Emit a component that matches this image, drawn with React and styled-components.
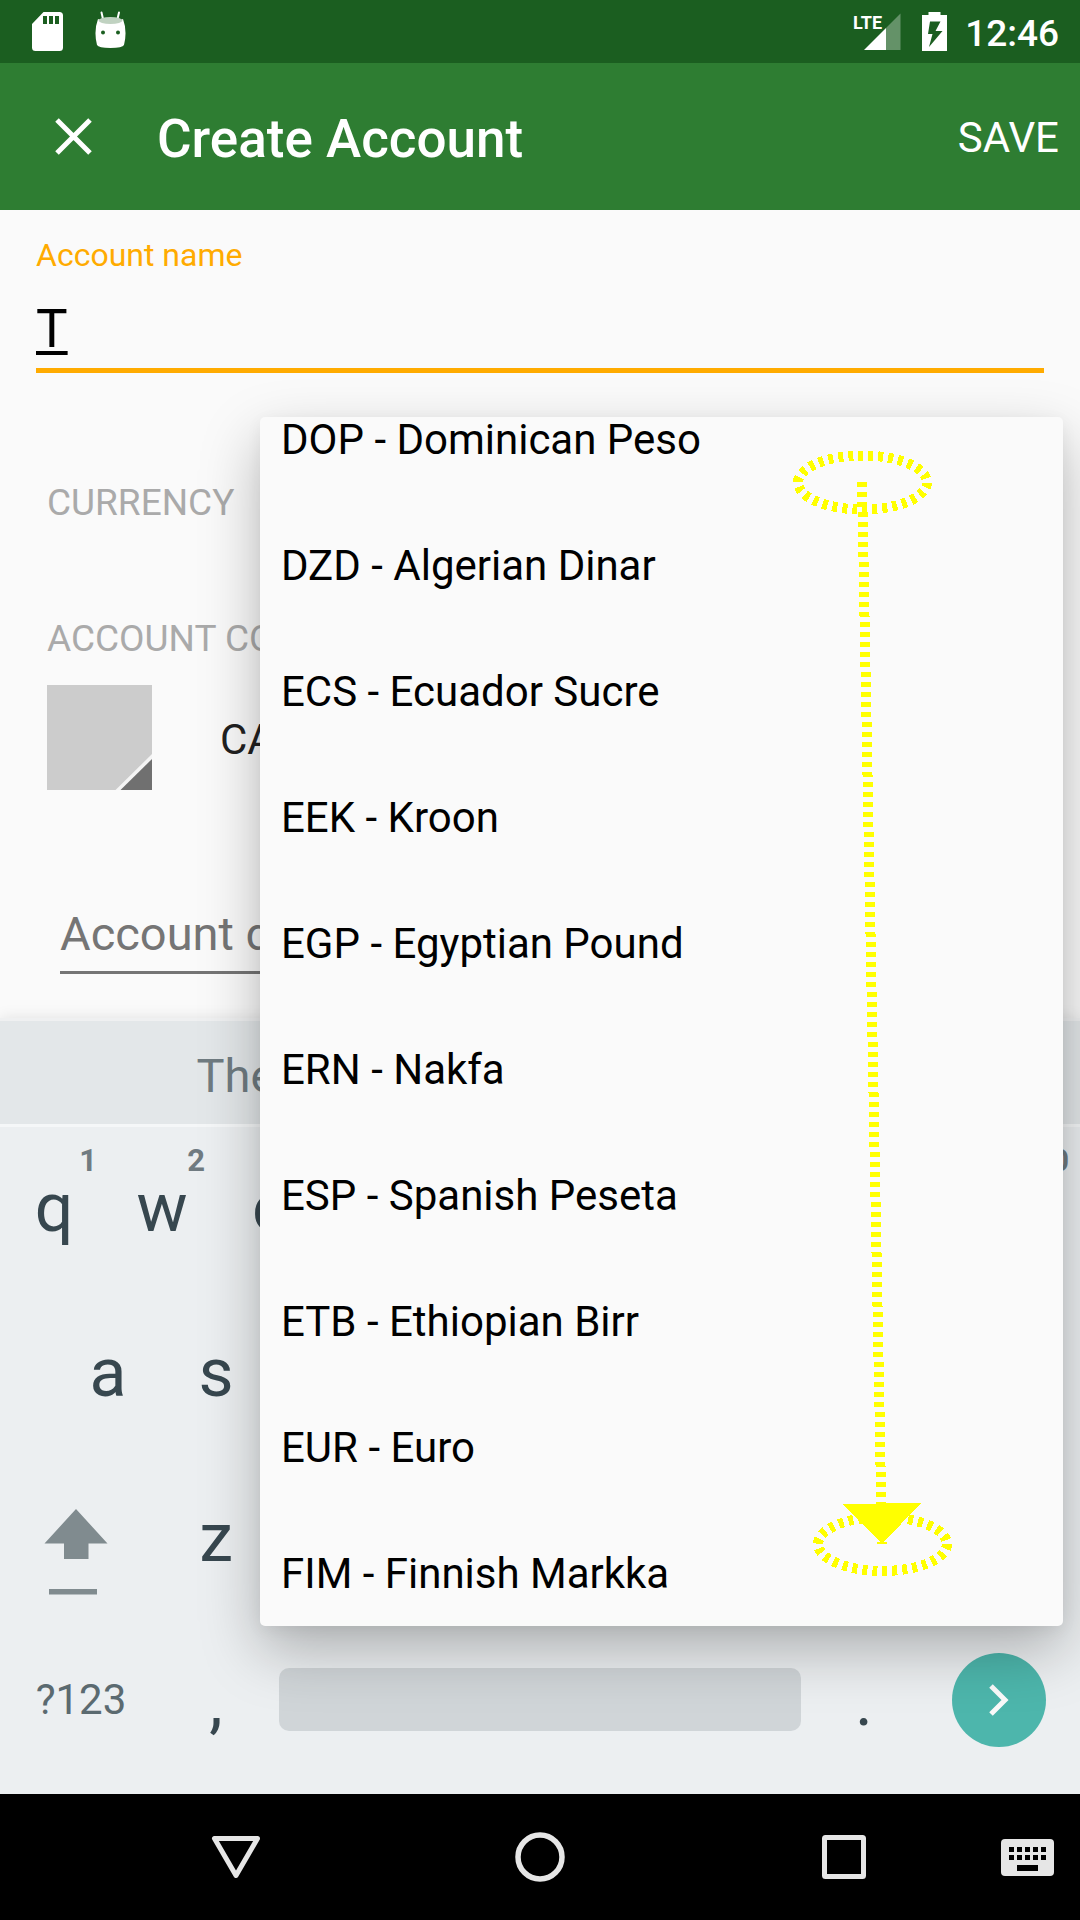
import React, { useLayoutEffect, useRef, useState } from "react";
import styled, { createGlobalStyle } from "styled-components";

const GlobalStyle = createGlobalStyle`
  *, *::before, *::after { box-sizing: border-box; }
  body { margin: 0; background: #fafafa; font-family: Roboto, "Noto Sans", sans-serif; }
  button, input, select { font-family: inherit; margin: 0; padding: 0; border: 0; border-radius: 0; background: none; outline: none; }
  svg { display: block; }
`;

const Screen = styled.div`
  position: relative;
  display: flex;
  flex-direction: column;
  min-height: 100vh;
  overflow: hidden;
`;

const StatusBar = styled.header`
  display: flex;
  justify-content: space-between;
  align-items: center;
  height: 63px;
  padding: 0 21px 0 32px;
  background: #1b5e20;
  color: #fff;
`;

const StatusGroup = styled.div`
  display: flex;
  align-items: center;
  gap: ${(p) => p.$gap}px;
`;

const Clock = styled.time`
  font-size: 37px;
  font-weight: 500;
  line-height: 63px;
  padding-top: 3px;
`;

const Toolbar = styled.div`
  display: flex;
  align-items: center;
  height: 147px;
  padding: 0 21px 0 42px;
  background: #2e7d32;
  color: #fff;
`;

const IconButton = styled.button`
  display: flex;
  align-items: center;
  justify-content: center;
  width: 63px;
  height: 63px;
  color: inherit;
`;

const Title = styled.h1`
  flex: 1;
  margin: 0;
  padding: 4px 0 0 52px;
  font-size: 53px;
  font-weight: 500;
  line-height: 64px;
`;

const SaveButton = styled.button`
  padding-top: 2px;
  color: inherit;
  font-size: 42px;
  line-height: 64px;
`;

const Form = styled.form`
  flex: 1;
  display: flex;
  flex-direction: column;
  padding: 27px 36px 44px;
  background: #fafafa;
`;

const NameLabel = styled.label`
  color: #ffab00;
  font-size: 32px;
  line-height: 36px;
`;

const NameInput = styled.input`
  width: 100%;
  height: 83px;
  margin-top: 17px;
  border-bottom: 5px solid #ffab00;
  color: #000;
  font-size: 53px;
  text-decoration: underline;
  text-decoration-thickness: 4px;
  text-underline-offset: 4px;
  text-decoration-skip-ink: none;
`;

const CurrencyRow = styled.div`
  display: flex;
  align-items: center;
  gap: 40px;
  height: 78px;
  margin-top: 91px;
  padding: 0 11px;
`;

const SectionLabel = styled.label`
  color: #aaa;
  font-size: 37px;
  line-height: 48px;
`;

const Spinner = styled.select`
  flex: 1;
  height: 78px;
  padding-top: 4px;
  appearance: none;
  color: #212121;
  font-size: 42px;
  visibility: ${(p) => (p.$covered ? "hidden" : "visible")};
`;

const TypeGroup = styled.div`
  display: flex;
  flex-direction: column;
  gap: 22px;
  margin-top: 73px;
  padding: 0 11px;
`;

const TypeRow = styled.div`
  display: flex;
  align-items: center;
  gap: 68px;
`;

const Swatch = styled.button`
  width: 105px;
  height: 105px;
`;

const DescriptionInput = styled.input`
  height: 77px;
  margin: 107px 24px 0;
  padding-bottom: 2px;
  border-bottom: 3px solid #757575;
  font-size: 47px;
  &::placeholder { color: #757575; opacity: 1; }
`;

const Keyboard = styled.section`
  padding-bottom: 7px;
  background: #eceff1;
  border-top: 3px solid #eff0f1;
  box-shadow: 0 0 14px rgba(0, 0, 0, 0.1);
`;

const Suggestions = styled.div`
  display: grid;
  grid-template-columns: repeat(3, 1fr);
  height: 106px;
  padding: 0 84px;
  background: #e3e7e9;
  border-bottom: 3px solid #f5f7f8;
`;

const Suggestion = styled.button`
  padding-top: 6px;
  color: #6f7b81;
  font-size: 47px;
`;

const KeyRow = styled.div`
  display: flex;
  align-items: center;
  height: 165px;
  padding: 0 ${(p) => p.$inset || 0}% 4px;
`;

const Key = styled.button`
  position: relative;
  flex: 2 1 0;
  display: flex;
  align-items: center;
  justify-content: center;
  height: 157px;
  color: #37474f;
  font-size: 68px;
  line-height: 80px;
  visibility: ${(p) => (p.$covered ? "hidden" : "visible")};
`;

const WideKey = styled(Key)`
  flex-grow: 3;

  > svg { margin: 28px 10px 0 0; }
`;

const KeyHint = styled.span`
  position: absolute;
  top: 14px;
  right: 11px;
  color: #707b81;
  font-size: 31px;
  font-weight: 700;
  line-height: 36px;
`;

const BottomRow = styled(KeyRow)`
  padding: 0 34px 10px 0;
`;

const SymbolKey = styled(Key)`
  flex: 0 0 162px;
  color: #5b6a70;
  font-size: 42px;
`;

const PunctuationKey = styled(Key)`
  flex: 0 0 108px;
  padding-top: 4px;
`;

const SpaceKey = styled.button`
  flex: 1;
  height: 63px;
  margin: 0 9px;
  border-radius: 10px;
  background: #d0d5d8;
`;

const NextKey = styled.button`
  display: flex;
  align-items: center;
  justify-content: center;
  width: 94px;
  height: 94px;
  margin-left: 34px;
  border-radius: 50%;
  background: #4db6ac;
`;

const CurrencyPopup = styled.div`
  position: absolute;
  top: 417px;
  right: 17px;
  bottom: 294px;
  left: 260px;
  border-radius: 5px;
  background: #fafafa;
  box-shadow: 0 24px 60px rgba(0, 0, 0, 0.27), 0 4px 16px rgba(0, 0, 0, 0.05);
`;

const CurrencyList = styled.div`
  height: 100%;
  overflow-y: auto;
  scrollbar-width: none;
  border-radius: 5px;
`;

const CurrencyOption = styled.button`
  display: block;
  width: 100%;
  height: 126px;
  padding: 0 21px;
  color: #000;
  font-size: 42px;
  line-height: 126px;
  text-align: left;
  white-space: nowrap;
`;

const ScrollGesture = styled.svg`
  position: absolute;
  top: 0;
  right: 73px;
  pointer-events: none;
`;

const NavBar = styled.nav`
  display: grid;
  grid-template-columns: 84px 1fr 1fr 1fr 84px;
  height: 126px;
  background: #000;
  color: #e6e6e6;
`;

const NavButton = styled.button`
  grid-column: ${(p) => p.$column};
  display: flex;
  align-items: center;
  justify-content: center;
  color: inherit;
`;

const KeyboardSwitch = styled(NavButton)`
  justify-content: flex-end;
  padding-right: 26px;
`;

const CURRENCIES = [
  ["DOP", "Dominican Peso"],
  ["DZD", "Algerian Dinar"],
  ["ECS", "Ecuador Sucre"],
  ["EEK", "Kroon"],
  ["EGP", "Egyptian Pound"],
  ["ERN", "Nakfa"],
  ["ESP", "Spanish Peseta"],
  ["ETB", "Ethiopian Birr"],
  ["EUR", "Euro"],
  ["FIM", "Finnish Markka"],
];

// Keys that lie wholly behind the open currency popup take no focus or taps.
const COVERED_KEYS = new Set("rtyuiodfghjklxcvbnm");

const SdCardIcon = () => (
  <svg width="31" height="39" viewBox="0 0 31 39" aria-hidden="true">
    <path fill="#fff" fillRule="evenodd" d="M11.500 0H27.500Q31 0 31 3.500V35.500Q31 39 27.500 39H3.500Q0 39 0 35.500V12ZM11 4v8h4v-8Zm6 0v8h4v-8Zm6 0v8h4v-8Z" />
  </svg>
);

const DroidIcon = () => (
  <svg width="31" height="42" viewBox="0 0 31 42" aria-hidden="true">
    <path stroke="#fff" strokeWidth="2" strokeLinecap="round" d="M6.500 1.500 8 8M24 1.500 22.500 8" />
    <path fill="#fff" d="M3 8Q15.500 15 28 8Q32.500 20 29 34Q27.500 37 15.500 37T2 34Q-1.500 20 3 8Z" />
    <ellipse cx="15.500" cy="9.500" rx="12" ry="3.500" fill="#c0d2c1" />
    <circle cx="8" cy="21.500" r="2" fill="#1b5e20" />
    <circle cx="23" cy="21.500" r="2" fill="#1b5e20" />
  </svg>
);

const SignalIcon = () => (
  <svg width="51" height="38" viewBox="0 0 51 38" role="img" aria-label="Signal">
    <path fill="#649268" d="M33 15 47.500 0.500V37H33Z" />
    <path fill="#fff" d="M11 37 33 15V37Z" />
    <text x="0" y="16" fill="#fff" fontFamily="Roboto, sans-serif" fontWeight="700" fontSize="18">LTE</text>
  </svg>
);

const BatteryIcon = () => (
  <svg width="25" height="39" viewBox="0 0 25 39" aria-hidden="true">
    <path fill="#fff" fillRule="evenodd" d="M6.500 0H18.500V3H25V39H0V3H6.500ZM8 9.500 6 22H10.500L7 35 20.500 19H13.500L18.500 9.500Z" />
  </svg>
);

const CloseIcon = () => (
  <svg width="37" height="37" viewBox="0 0 37 37" aria-hidden="true">
    <path stroke="#fff" strokeWidth="5" d="M2 2 35 35M35 2 2 35" />
  </svg>
);

const SwatchArt = () => (
  <svg width="105" height="105" viewBox="0 0 105 105" aria-hidden="true">
    <path fill="#ccc" d="M0 0H105V105H0Z" />
    <path fill="#f5f5f5" d="M105 69V105H68.500Z" />
    <path fill="#707070" d="M105 74V105H73.500Z" />
  </svg>
);

const ShiftIcon = () => (
  <svg width="64" height="86" viewBox="0 0 64 86" aria-hidden="true">
    <path fill="#808b8f" d="M32 0 63.500 34.500H44.500V50H20V34.500H0.500ZM5 80H53V85.500H5Z" />
  </svg>
);

const BackspaceIcon = () => (
  <svg width="64" height="48" viewBox="0 0 64 48" aria-hidden="true">
    <path fill="#808b8f" fillRule="evenodd" d="M20 0H64V48H20L0 24ZM30 13 41 24 30 35 33 38 44 27 55 38 58 35 47 24 58 13 55 10 44 21 33 10Z" />
  </svg>
);

const ChevronIcon = () => (
  <svg width="22" height="34" viewBox="0 0 22 34" aria-hidden="true">
    <path fill="none" stroke="#fafafa" strokeWidth="5" d="M3 3 17 17 3 31" />
  </svg>
);

const BackIcon = () => (
  <svg width="50" height="44" viewBox="0 0 50 44" aria-hidden="true">
    <path fill="none" stroke="currentColor" strokeWidth="5" strokeLinejoin="round" d="M3.500 3.500H46.500L25 40.500Z" />
  </svg>
);

const HomeIcon = () => (
  <svg width="50" height="50" viewBox="0 0 50 50" aria-hidden="true">
    <circle cx="25" cy="25" r="22" fill="none" stroke="currentColor" strokeWidth="5.500" />
  </svg>
);

const RecentsIcon = () => (
  <svg width="44" height="44" viewBox="0 0 44 44" aria-hidden="true">
    <rect x="2.500" y="2.500" width="39" height="39" rx="1" fill="none" stroke="currentColor" strokeWidth="5" />
  </svg>
);

const KEY_DOTS = [8, 16, 24, 32, 40];

const KeyboardIcon = () => (
  <svg width="53" height="37" viewBox="0 0 53 37" aria-hidden="true">
    <rect width="53" height="37" rx="4" fill="currentColor" />
    {KEY_DOTS.map((x) => (
      <path key={x} fill="#000" d={`M${x} 8h5v5h-5ZM${x} 16h5v5h-5Z`} />
    ))}
    <path fill="#000" d="M16 26h21v6h-21Z" />
  </svg>
);

const LetterKey = ({ letter, hint }) => (
  <Key type="button" $covered={COVERED_KEYS.has(letter)}>
    {letter}
    {hint !== undefined && <KeyHint>{hint}</KeyHint>}
  </Key>
);

export default function App() {
  const listRef = useRef(null);
  const [name, setName] = useState("T");

  useLayoutEffect(() => {
    listRef.current.scrollTop = 40;
  }, []);

  return (
    <>
      <GlobalStyle />
      <Screen>
        <StatusBar>
          <StatusGroup $gap={32}>
            <SdCardIcon />
            <DroidIcon />
          </StatusGroup>
          <StatusGroup $gap={18}>
            <SignalIcon />
            <BatteryIcon />
            <Clock>12:46</Clock>
          </StatusGroup>
        </StatusBar>

        <Toolbar>
          <IconButton type="button" aria-label="Close"><CloseIcon /></IconButton>
          <Title>Create Account</Title>
          <SaveButton type="submit" form="account-form">SAVE</SaveButton>
        </Toolbar>

        <Form id="account-form" onSubmit={(e) => e.preventDefault()}>
          <NameLabel htmlFor="name">Account name</NameLabel>
          <NameInput id="name" value={name} onChange={(e) => setName(e.target.value)} autoComplete="off" />
          <CurrencyRow>
            <SectionLabel htmlFor="currency">CURRENCY</SectionLabel>
            <Spinner id="currency" defaultValue="EUR" $covered>
              {CURRENCIES.map(([code]) => <option key={code}>{code}</option>)}
            </Spinner>
          </CurrencyRow>
          <TypeGroup>
            <SectionLabel htmlFor="type">ACCOUNT COLOR &amp; TYPE</SectionLabel>
            <TypeRow>
              <Swatch type="button" aria-label="Account color"><SwatchArt /></Swatch>
              <Spinner id="type"><option>CASH</option></Spinner>
            </TypeRow>
          </TypeGroup>
          <DescriptionInput aria-label="Account description" placeholder="Account description" />
        </Form>

        <Keyboard aria-label="Keyboard">
          <Suggestions><Suggestion type="button">The</Suggestion></Suggestions>
          <KeyRow>
            {[..."qwertyuiop"].map((letter, i) => (
              <LetterKey key={letter} letter={letter} hint={(i + 1) % 10} />
            ))}
          </KeyRow>
          <KeyRow $inset={5}>
            {[..."asdfghjkl"].map((letter) => <LetterKey key={letter} letter={letter} />)}
          </KeyRow>
          <KeyRow>
            <WideKey type="button" aria-label="Shift"><ShiftIcon /></WideKey>
            {[..."zxcvbnm"].map((letter) => <LetterKey key={letter} letter={letter} />)}
            <WideKey type="button" aria-label="Delete" $covered><BackspaceIcon /></WideKey>
          </KeyRow>
          <BottomRow>
            <SymbolKey type="button">?123</SymbolKey>
            <PunctuationKey type="button">,</PunctuationKey>
            <SpaceKey type="button" aria-label="Space" />
            <PunctuationKey type="button">.</PunctuationKey>
            <NextKey type="button" aria-label="Next"><ChevronIcon /></NextKey>
          </BottomRow>
        </Keyboard>

        <NavBar>
          <NavButton type="button" $column={2} aria-label="Back"><BackIcon /></NavButton>
          <NavButton type="button" $column={3} aria-label="Home"><HomeIcon /></NavButton>
          <NavButton type="button" $column={4} aria-label="Recents"><RecentsIcon /></NavButton>
          <KeyboardSwitch type="button" $column={5} aria-label="Switch keyboard"><KeyboardIcon /></KeyboardSwitch>
        </NavBar>

        <CurrencyPopup>
          <CurrencyList ref={listRef} role="listbox" aria-label="Currency">
            {CURRENCIES.map(([code, label]) => (
              <CurrencyOption key={code} type="button" role="option" aria-selected={code === "EUR"}>
                {code} - {label}
              </CurrencyOption>
            ))}
          </CurrencyList>
          <ScrollGesture width="200" height="1209" viewBox="0 0 200 1209" shapeRendering="crispEdges" aria-hidden="true">
            <g fill="none" stroke="#ff0" strokeWidth="10" strokeDasharray="5 5">
              <ellipse cx="72.500" cy="65.500" rx="64.500" ry="27" />
              <ellipse cx="92.500" cy="1127" rx="64.500" ry="27" />
              <path d="M72 65 92 1127" />
            </g>
            <path fill="#ff0" d="M52 1087 131 1086 92 1127Z" />
          </ScrollGesture>
        </CurrencyPopup>
      </Screen>
    </>
  );
}
